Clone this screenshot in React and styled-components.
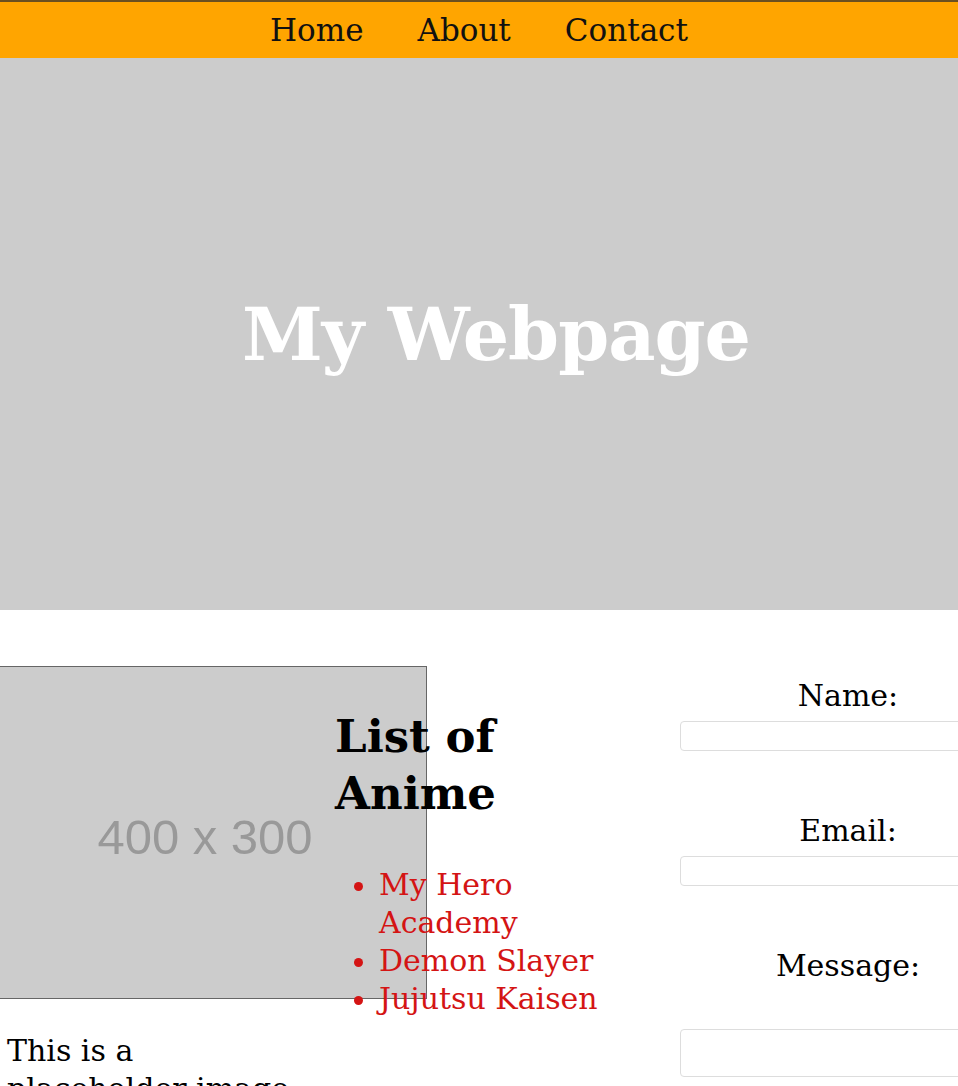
import styled, { createGlobalStyle } from "styled-components";

const GlobalStyle = createGlobalStyle`
  html {
    overflow: hidden;
  }
  body {
    margin: 0;
    font-family: "DejaVu Serif", "Liberation Serif", serif;
    color: #000;
    background: #fff;
  }
`;

const Page = styled.div`
  width: 1016px;
`;

const Nav = styled.nav`
  border-top: 2px solid #6b5020;
  background: #ffa500;
  height: 56px;
  display: flex;
  justify-content: center;
  align-items: center;
  gap: 54px;
  padding-right: 4px;
  width: 958px;
  box-sizing: content-box;
`;

const NavLink = styled.a`
  font-size: 31px;
  color: #111;
  text-decoration: none;
`;

const Hero = styled.header`
  background: #ccc;
  height: 552px;
  width: 958px;
  display: flex;
  align-items: center;
  justify-content: center;
  padding-left: 34px;
  box-sizing: border-box;
`;

const Title = styled.h1`
  margin: 0;
  font-size: 73px;
  font-weight: 700;
  color: #fff;
  letter-spacing: -1px;
`;

const Main = styled.main`
  display: grid;
  grid-template-columns: 335px 345px 336px;
  padding-top: 56px;
`;

const Figure = styled.figure`
  margin: 0;
`;

const Placeholder = styled.div`
  width: 444px;
  height: 333px;
  margin-left: -17px;
  box-sizing: border-box;
  border: 1px solid #666;
  background: #ccc;
  display: flex;
  align-items: center;
  justify-content: center;
  padding-top: 8px;
  font-family: "Liberation Sans", Arial, sans-serif;
  font-size: 49px;
  color: #999;
`;

const Caption = styled.figcaption`
  padding: 33px 7px 0;
  width: 290px;
  font-size: 30px;
  line-height: 38px;
`;

const ListColumn = styled.section``;

const Heading = styled.h2`
  margin: 42px 0 44px;
  font-size: 45px;
  line-height: 57px;
  font-weight: 700;
  width: 300px;
`;

const AnimeList = styled.ul`
  margin: 0;
  padding-left: 44px;
  width: 260px;
  color: #d41414;
  font-size: 30px;
  line-height: 38px;
`;

const Form = styled.form`
  display: flex;
  flex-direction: column;
  padding-top: 10px;
`;

const Label = styled.label`
  display: block;
  text-align: center;
  font-size: 30px;
  line-height: 40px;
  margin-bottom: ${(p) => p.$gap ?? 5}px;
`;

const Input = styled.input`
  height: 30px;
  box-sizing: border-box;
  border: 1px solid #ddd;
  border-radius: 4px;
  margin-bottom: 60px;
`;

const Textarea = styled.textarea`
  height: 48px;
  box-sizing: border-box;
  border: 1px solid #ddd;
  border-radius: 4px;
  resize: none;
`;

export default function App() {
  return (
    <Page>
      <GlobalStyle />
      <Nav>
        <NavLink href="#">Home</NavLink>
        <NavLink href="#">About</NavLink>
        <NavLink href="#">Contact</NavLink>
      </Nav>
      <Hero>
        <Title>My Webpage</Title>
      </Hero>
      <Main>
        <Figure>
          <Placeholder>400 x 300</Placeholder>
          <Caption>This is a placeholder image</Caption>
        </Figure>
        <ListColumn>
          <Heading>List of Anime</Heading>
          <AnimeList>
            <li>My Hero Academy</li>
            <li>Demon Slayer</li>
            <li>Jujutsu Kaisen</li>
          </AnimeList>
        </ListColumn>
        <Form>
          <Label htmlFor="name">Name:</Label>
          <Input id="name" type="text" />
          <Label htmlFor="email">Email:</Label>
          <Input id="email" type="email" />
          <Label htmlFor="message" $gap={43}>
            Message:
          </Label>
          <Textarea id="message" />
        </Form>
      </Main>
    </Page>
  );
}
